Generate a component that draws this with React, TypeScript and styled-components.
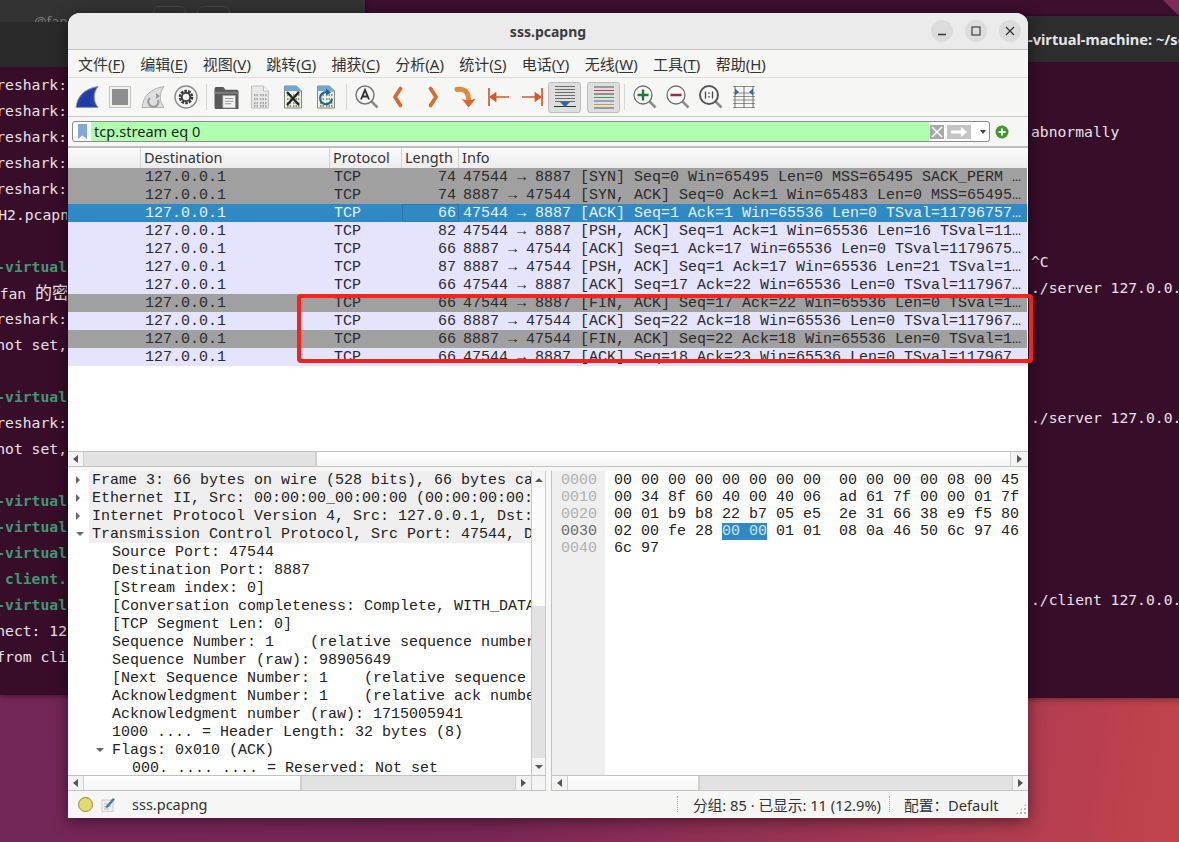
import React from "react";
import styled, { createGlobalStyle } from "styled-components";

const UI_FONT = `"Noto Sans", "Noto Sans CJK SC", sans-serif`;
const MONO_FONT = `"Liberation Mono", monospace`;
const TERM_FONT = `"DejaVu Sans Mono", "Noto Sans CJK SC", monospace`;

const GlobalStyle = createGlobalStyle`
  html, body {
    margin: 0;
    padding: 0;
    overflow: hidden;
  }
  #root {
    width: 1179px;
    height: 842px;
  }
`;

/* ---------- desktop and the terminals behind ---------- */

const Desktop = styled.div`
  position: relative;
  width: 1179px;
  height: 842px;
  overflow: hidden;
  background:
    linear-gradient(180deg, #3d0e2e 0, #3d0e2e 60px, rgba(61, 14, 46, 0) 60px),
    linear-gradient(100deg, #73265a 0%, #7a2656 48%, #a93a52 82%, #c2444a 100%);
`;

const Corner = styled.div`
  position: absolute;
  top: 0;
  right: 0;
  width: 16px;
  height: 16px;
  background: #7d2a5c;
  clip-path: polygon(0 0, 100% 0, 100% 100%);
`;

const Terminal = styled.div<{ $left: number; $top: number; $width: number; $height: number }>`
  position: absolute;
  left: ${(p) => p.$left}px;
  top: ${(p) => p.$top}px;
  width: ${(p) => p.$width}px;
  height: ${(p) => p.$height}px;
  background: #380d2a;
  display: flex;
  flex-direction: column;
  box-shadow: 0 1px 6px rgba(0, 0, 0, 0.45);
`;

const TermBar = styled.div`
  height: 46px;
  flex: none;
  background: #2d2d2d;
  color: #e6e6e6;
  font: bold 14.6px ${UI_FONT};
  display: flex;
  align-items: center;
  padding-left: 28px;
  white-space: nowrap;
  overflow: hidden;
`;

const LeftBarTop = styled.div`
  height: 22px;
  flex: none;
  background: #333333;
  box-sizing: border-box;
  padding: 6px 0 0 153px;
  display: flex;
  gap: 11px;
  position: relative;
  overflow: hidden;
`;

const LeftBarTitle = styled.div`
  position: absolute;
  left: 34px;
  top: 12px;
  font: 14px ${UI_FONT};
  color: #77777a;
  filter: blur(0.6px);
`;

const LeftBarBottom = styled.div`
  height: 45px;
  flex: none;
  background: #2a2a2a;
`;

const TermTab = styled.div`
  width: 33px;
  height: 22px;
  box-sizing: border-box;
  border: 1px solid #454545;
  border-radius: 6px;
`;

const TermBody = styled.div<{ $top: number }>`
  padding-top: ${(p) => p.$top}px;
  font: 14.7px/26px ${TERM_FONT};
  color: #e9e3e7;
  white-space: pre;
`;

const LeftLine = styled.div<{ $green?: boolean }>`
  width: 67px;
  height: 26px;
  display: flex;
  justify-content: flex-end;
  overflow: hidden;
  color: ${(p) => (p.$green ? "#3f9a72" : "#e9e3e7")};
  font-weight: ${(p) => (p.$green ? "bold" : "normal")};
`;

const LeftText = styled.span<{ $over?: number }>`
  flex: none;
  margin-right: ${(p) => -(p.$over ?? 0)}px;
`;

const LeftCjk = styled.span`
  font-size: 17px;
`;

const RightLine = styled.div`
  height: 26px;
  padding-left: 31px;
`;

/* ---------- the Wireshark window ---------- */

const Window = styled.div`
  position: absolute;
  left: 68px;
  top: 13px;
  width: 960px;
  height: 805px;
  border-radius: 12px 12px 0 0;
  background: #f6f6f5;
  box-shadow: 0 3px 16px rgba(0, 0, 0, 0.5);
  display: flex;
  flex-direction: column;
  overflow: hidden;
  font: 14.5px ${UI_FONT};
  color: #2e2e2e;
`;

const TitleBar = styled.div`
  height: 36px;
  flex: none;
  background: #ebebeb;
  border-bottom: 1px solid #c4c4c4;
  display: flex;
  align-items: center;
  justify-content: flex-end;
  gap: 12px;
  padding-right: 7px;
  position: relative;
`;

const TitleText = styled.div`
  position: absolute;
  left: 0;
  right: 0;
  text-align: center;
  font: bold 14px ${UI_FONT};
  color: #3c3c3c;
`;

const WinButton = styled.div`
  width: 22px;
  height: 22px;
  border-radius: 50%;
  background: #dcdcdc;
  display: flex;
  align-items: center;
  justify-content: center;
  margin-top: -1px;
  z-index: 1;
`;

const MenuBar = styled.div`
  height: 27px;
  flex: none;
  border-bottom: 1px solid #dcdcdc;
  display: flex;
  align-items: center;
  gap: 15.3px;
  padding-left: 10px;
  font-size: 15px;
  color: #333;
`;

const MenuItem = styled.div`
  white-space: nowrap;
  u {
    text-underline-offset: 2px;
  }
`;

const ToolBar = styled.div`
  height: 38px;
  flex: none;
  border-bottom: 1px solid #c8c8c8;
  display: flex;
  align-items: center;
  padding-left: 2px;
`;

const ToolButton = styled.div<{ $pressed?: boolean; $gap?: number }>`
  width: 33px;
  height: 31px;
  flex: none;
  box-sizing: border-box;
  margin-left: ${(p) => p.$gap ?? 0}px;
  display: flex;
  align-items: center;
  justify-content: center;
  border-radius: 3px;
  background: ${(p) => (p.$pressed ? "#dedede" : "transparent")};
  border: 1px solid ${(p) => (p.$pressed ? "#bcbcbc" : "transparent")};
`;

const ToolSep = styled.div`
  width: 1px;
  height: 26px;
  flex: none;
  margin: 0 3.5px;
  background: #d8d8d8;
`;

const FilterRow = styled.div`
  height: 29px;
  flex: none;
  display: flex;
  align-items: center;
  padding-left: 4px;
  gap: 5px;
`;

const FilterBox = styled.div`
  width: 918px;
  height: 21px;
  box-sizing: border-box;
  border: 1px solid #8c8c8c;
  border-radius: 3px;
  display: flex;
  align-items: stretch;
  background: #fff;
  overflow: hidden;
`;

const BookmarkSlot = styled.div`
  width: 18px;
  flex: none;
  display: flex;
  align-items: center;
  justify-content: center;
`;

const FilterInput = styled.div`
  width: 838px;
  flex: none;
  padding-left: 3px;
  box-sizing: border-box;
  background: #afffaf;
  color: #1f1f1f;
  font-size: 14.6px;
  line-height: 19px;
`;

const FilterTools = styled.div`
  display: flex;
  align-items: center;
  padding-left: 1px;
  gap: 3px;
`;

const ClearBox = styled.div`
  width: 14px;
  height: 14px;
  background: #a8a8a8;
  display: flex;
  align-items: center;
  justify-content: center;
`;

const ApplyBox = styled.div`
  width: 24px;
  height: 14px;
  background: #c4c4c4;
  display: flex;
  align-items: center;
  justify-content: center;
`;

const Caret = styled.div`
  width: 0;
  height: 0;
  margin-left: 6px;
  border-left: 3.5px solid transparent;
  border-right: 3.5px solid transparent;
  border-top: 4px solid #444;
`;

const PaneGap = styled.div`
  height: 2px;
  flex: none;
  background: #bdbdbd;
`;

const columns = "73px 189px 72px 57px 1fr";

const HeaderRow = styled.div`
  height: 20px;
  flex: none;
  display: grid;
  grid-template-columns: ${columns};
  background: linear-gradient(180deg, #fbfbfb, #ececec);
`;

const HeaderCell = styled.div`
  padding-left: 3px;
  font-size: 14.5px;
  line-height: 19px;
  color: #333;
  border-right: 1px solid #d2d2d2;
  &:last-child {
    border-right: none;
  }
`;

const PacketList = styled.div`
  height: 283px;
  flex: none;
  background: #fff;
`;

const rowColors = {
  fin: { bg: "#a0a0a0", fg: "#2b2b2b" },
  plain: { bg: "#e4e4ff", fg: "#2a2a2e" },
  selected: { bg: "#2e89c4", fg: "#e6f3fc" },
};

type RowKind = keyof typeof rowColors;

const PacketRow = styled.div<{ $kind: RowKind }>`
  height: 18px;
  display: grid;
  grid-template-columns: ${columns};
  margin-right: 1px;
  background: ${(p) => rowColors[p.$kind].bg};
  color: ${(p) => rowColors[p.$kind].fg};
  font: 15px/20px ${MONO_FONT};
  white-space: pre;
  overflow: hidden;
`;

const Cell = styled.div<{ $pad?: number }>`
  padding-left: ${(p) => p.$pad ?? 4}px;
  overflow: hidden;
`;

const LengthCell = styled.div<{ $focus?: boolean }>`
  height: 18px;
  text-align: right;
  padding-right: 2px;
  box-sizing: border-box;
  border: 1px solid ${(p) => (p.$focus ? "#2a79ad" : "transparent")};
  line-height: 18px;
`;

const HScroll = styled.div`
  height: 14px;
  flex: none;
  display: flex;
  background: #fff;
  border-top: 1px solid #c2c2c2;
  border-bottom: 1px solid #c2c2c2;
`;

const ScrollArrow = styled.div<{ $size?: number }>`
  width: ${(p) => p.$size ?? 15}px;
  flex: none;
  display: flex;
  align-items: center;
  justify-content: center;
  background: #f3f3f3;
`;

const ArrowLeft = styled.div`
  border-top: 4px solid transparent;
  border-bottom: 4px solid transparent;
  border-right: 5px solid #555;
`;

const ArrowRight = styled.div`
  border-top: 4px solid transparent;
  border-bottom: 4px solid transparent;
  border-left: 5px solid #555;
`;

const ScrollPart = styled.div<{ $width?: number; $trough?: boolean }>`
  flex: ${(p) => (p.$width ? `0 0 ${p.$width}px` : "1")};
  box-sizing: border-box;
  background: ${(p) => (p.$trough ? "#e2e2e2" : "linear-gradient(180deg, #ffffff, #f4f4f4)")};
  border-left: 1px solid #cfcfcf;
  border-right: 1px solid #cfcfcf;
`;

const Splitter = styled.div`
  height: 4px;
  flex: none;
  background: #f6f6f5;
`;

const Panes = styled.div`
  height: 320px;
  flex: none;
  display: flex;
`;

const DetailCol = styled.div`
  width: 478px;
  flex: none;
  display: flex;
  flex-direction: column;
  background: #fff;
`;

const HexCol = styled.div`
  width: 477px;
  flex: none;
  margin-left: 5px;
  display: flex;
  flex-direction: column;
  box-sizing: border-box;
  border-left: 1px solid #c2c2c2;
  background: #fff;
`;

const DetailMain = styled.div`
  flex: 1;
  min-height: 0;
  display: flex;
`;

const DetailTree = styled.div`
  width: 463px;
  flex: none;
  overflow: hidden;
  font: 15px/20px ${MONO_FONT};
  color: #222;
  white-space: pre;
`;

const TreeRow = styled.div<{ $depth: number; $top?: boolean }>`
  position: relative;
  height: 18px;
  padding-left: ${(p) => 3 + p.$depth * 20}px;
  margin-left: 21px;
  background: ${(p) => (p.$top ? "#efefef" : "transparent")};
`;

const Twisty = styled.span<{ $open?: boolean; $depth: number }>`
  position: absolute;
  left: ${(p) => -13 + p.$depth * 20}px;
  top: ${(p) => (p.$open ? 7 : 5)}px;
  width: 0;
  height: 0;
  ${(p) =>
    p.$open
      ? `border-left: 4px solid transparent; border-right: 4px solid transparent; border-top: 4px solid #666;`
      : `border-top: 4px solid transparent; border-bottom: 4px solid transparent; border-left: 4px solid #666;`}
`;

const VScroll = styled.div`
  width: 15px;
  flex: none;
  box-sizing: border-box;
  border-left: 1px solid #c8c8c8;
  border-right: 1px solid #c8c8c8;
  display: flex;
  flex-direction: column;
`;

const VArrow = styled.div`
  height: 17px;
  flex: none;
  display: flex;
  align-items: center;
  justify-content: center;
  background: #f5f5f5;
`;

const ArrowUp = styled.div`
  border-left: 4px solid transparent;
  border-right: 4px solid transparent;
  border-bottom: 4px solid #555;
`;

const ArrowDown = styled.div`
  border-left: 4px solid transparent;
  border-right: 4px solid transparent;
  border-top: 4px solid #555;
`;

const VPart = styled.div<{ $height?: number; $trough?: boolean }>`
  flex: ${(p) => (p.$height ? `0 0 ${p.$height}px` : "1")};
  background: ${(p) => (p.$trough ? "#e2e2e2" : "#fbfbfb")};
`;

const ScrollFoot = styled.div`
  width: 15px;
  flex: none;
  background: #f3f3f3;
  border-left: 1px solid #c8c8c8;
  border-right: 1px solid #c8c8c8;
  box-sizing: border-box;
`;

const HexMain = styled.div`
  flex: 1;
  min-height: 0;
  display: flex;
  font: 15px/17px ${MONO_FONT};
  white-space: pre;
`;

const Gutter = styled.div`
  width: 53px;
  flex: none;
  box-sizing: border-box;
  padding: 1px 0 0 9px;
  background: #efefef;
`;

const OffsetLine = styled.div<{ $active?: boolean }>`
  color: ${(p) => (p.$active ? "#6a6a6a" : "#b0b0b0")};
`;

const HexBytes = styled.div`
  padding: 1px 0 0 9px;
  color: #222;
`;

const HexMark = styled.span`
  background: #2e89c4;
  color: #cfe6f6;
`;

const StatusBar = styled.div`
  height: 28px;
  flex: none;
  box-sizing: border-box;
  padding: 0 0 2px 10px;
  display: flex;
  align-items: center;
  font-size: 14.7px;
  color: #333;
`;

const Led = styled.div`
  width: 13px;
  height: 13px;
  border-radius: 50%;
  background: #e0dc6e;
  border: 1px solid #8b8a44;
`;

const EditSlot = styled.div`
  margin-left: 8px;
  display: flex;
`;

const StatusName = styled.div`
  margin-left: 16px;
  font-size: 14.5px;
`;

const StatusSep = styled.div`
  width: 0;
  height: 16px;
  border-left: 1px dotted #aaa;
`;

const StatusGroup = styled.div`
  margin-left: auto;
  display: flex;
  align-items: center;
`;

const StatusCount = styled.div`
  margin: 0 8px 0 15px;
`;

const StatusProfile = styled.div`
  width: 97px;
  margin-left: 14px;
  white-space: pre;
`;

const Grip = styled.div`
  width: 12px;
  height: 12px;
  margin: 10px 1px 0 14px;
  background-image: radial-gradient(#b8b8b8 1px, transparent 1px);
  background-size: 4px 4px;
  clip-path: polygon(100% 0, 100% 100%, 0 100%);
`;

const RedBox = styled.div`
  position: absolute;
  left: 297px;
  top: 294px;
  width: 736px;
  height: 69px;
  box-sizing: border-box;
  border: 4px solid #f4241c;
  border-radius: 4px;
`;

/* ---------- toolbar drawings ---------- */

const Icon = ({ children, size = 24, view = 24 }: { children: React.ReactNode; size?: number; view?: number }) => (
  <svg width={size} height={size} viewBox={`0 0 ${view} ${view}`} fill="none">
    {children}
  </svg>
);

const FinIcon = () => (
  <Icon>
    <path d="M1 22.5C2 12 9 3.5 23 1.5C18 8 18 16 23 22.5Z" fill="#2740b0" stroke="#8d97a8" strokeWidth="1" />
    <path d="M5 21C7 13 12 7 19 4C14 9 14 16 17 21Z" fill="#1c3aa8" />
  </Icon>
);

const StopIcon = () => (
  <Icon>
    <rect x="1.5" y="1.5" width="21" height="21" fill="#efefef" stroke="#c4c4c4" />
    <rect x="4" y="4" width="16" height="16" fill="#8e8e8e" />
  </Icon>
);

const RestartIcon = () => (
  <Icon>
    <path d="M1 22.5C2 12 9 3.5 23 1.5C18 8 18 16 23 22.5Z" fill="#dedede" stroke="#b0b0b0" />
    <path d="M9 13a5 5 0 1 0 8 2" stroke="#9a9a9a" strokeWidth="2.2" />
    <path d="M15 8v6l4-3z" fill="#9a9a9a" />
  </Icon>
);

const GearIcon = () => (
  <Icon>
    <circle cx="12" cy="12" r="11" fill="#f4f4f4" stroke="#8a8a8a" strokeWidth="1.4" />
    <circle cx="12" cy="12" r="6" stroke="#3a3a3a" strokeWidth="2.6" strokeDasharray="2.6 1.1" />
    <circle cx="12" cy="12" r="4.2" stroke="#3a3a3a" strokeWidth="1.8" />
  </Icon>
);

const FolderIcon = () => (
  <Icon size={25}>
    <path d="M0.5 3.5A1.5 1.5 0 0 1 2 2h7l2 2.5h11A1.5 1.5 0 0 1 23.5 6v17H2A1.5 1.5 0 0 1 0.5 21.5Z" fill="#5a5a5a" />
    <rect x="0.5" y="6.5" width="23" height="2" fill="#7c7c7c" />
    <rect x="8.5" y="10" width="12" height="12" fill="#f1f1f1" stroke="#9a9a9a" strokeWidth=".6" />
    <path d="M10.5 13h8M10.5 15.5h8M10.5 18h6" stroke="#9a9a9a" />
  </Icon>
);

const FileShape = ({ fill = "#e8e8e8", stroke = "#c0c0c0" }: { fill?: string; stroke?: string }) => (
  <>
    <path d="M3.5 1h12l5 5v17h-17z" fill={fill} stroke={stroke} />
    <path d="M15.5 1v5h5" fill="#f8f8f8" stroke={stroke} />
  </>
);

const BinaryRows = ({ color }: { color: string }) => (
  <g fill={color}>
    {[9, 13, 17, 20].map((y) =>
      [6, 8.5, 12, 14.5, 17].map((x) => <rect key={`${x}-${y}`} x={x} y={y} width="1.5" height="2.2" />)
    )}
  </g>
);

const BinFileIcon = () => (
  <Icon>
    <FileShape />
    <BinaryRows color="#a8a8a8" />
  </Icon>
);

const CloseFileIcon = () => (
  <Icon>
    <FileShape fill="#eef2e4" stroke="#7f8a78" />
    <path d="M3.5 1h12l5 5h-17z" fill="#6fa8d8" />
    <BinaryRows color="#8f9a7c" />
    <path d="M6 7l12 13M18 7L6 20" stroke="#222" strokeWidth="2.2" />
  </Icon>
);

const ReloadFileIcon = () => (
  <Icon>
    <FileShape fill="#eef2e4" stroke="#7f8a78" />
    <path d="M3.5 1h12l5 5h-17z" fill="#6fa8d8" />
    <BinaryRows color="#8f9a7c" />
    <path d="M15 8a6 6 0 1 0 3 6" stroke="#24609f" strokeWidth="2.2" />
    <path d="M12 3.5v7l5-3z" fill="#24609f" />
  </Icon>
);

const FindIcon = () => (
  <Icon>
    <path d="M16 16l6.5 6.5" stroke="#8d8d8d" strokeWidth="2.6" />
    <circle cx="10" cy="10" r="9" fill="#f6f6f6" stroke="#777" strokeWidth="1.5" />
    <path d="M6 14.5L10 5l4 9.5M7.5 11.5h5" stroke="#333" strokeWidth="1.9" />
  </Icon>
);

const ChevronIcon = ({ flip }: { flip?: boolean }) => (
  <Icon>
    <path
      d={flip ? "M9.5 3.5l5.5 8.5-5.500 8.500" : "M12.5 3.5L7 12l5.500 8.500"}
      stroke="#dc6a2c"
      strokeWidth="3.8"
      strokeLinecap="round"
      strokeLinejoin="round"
    />
  </Icon>
);

const JumpIcon = () => (
  <Icon>
    <path d="M3 4.5c6 -1 11 1 11.500 9" stroke="#e08a3c" strokeWidth="5" strokeLinecap="round" />
    <path d="M7.5 13.5l7 9 7.500-9c-2.500 1-5 1.500-7.500 1.500s-5-.5-7.500-1.500z" fill="#d9662a" />
  </Icon>
);

const EdgeIcon = ({ flip }: { flip?: boolean }) => (
  <Icon>
    <g transform={flip ? "matrix(-1 0 0 1 24 0)" : undefined} stroke="#d9562a" strokeWidth="1.7">
      <path d="M2 3v18" />
      <path d="M7 12h15" />
      <path d="M3.5 12l5-3.5v7z" fill="#d9562a" />
    </g>
  </Icon>
);

const AutoScrollIcon = () => (
  <Icon size={26} view={26}>
    <path d="M3 2.5h20M3 5.5h20M3 8.5h20M3 11.5h20M3 14.5h20M3 17.5h20" stroke="#6c6c6c" />
    <path d="M2 22.5h22" stroke="#333" />
    <path d="M8 18h10l-5 5z" fill="#2c62a8" />
  </Icon>
);

const ColorizeIcon = () => (
  <Icon size={26} view={26}>
    <path d="M3 3h20" stroke="#555" />
    <path d="M3 6.5h20" stroke="#c8404a" />
    <path d="M3 10h20" stroke="#444" />
    <path d="M3 13.5h20" stroke="#4a9a4a" />
    <path d="M3 17h20" stroke="#4a6ab0" />
    <path d="M3 20.5h20" stroke="#c8a030" />
    <path d="M3 24h20" stroke="#555" />
  </Icon>
);

const ZoomIcon = ({ mark }: { mark: "in" | "out" | "fit" }) => (
  <Icon>
    <path d="M16 16l6.5 6.5" stroke="#8d8d8d" strokeWidth="2.6" />
    <circle cx="10" cy="10" r="9" fill="#f8f8f8" stroke={mark === "fit" ? "#555" : "#6e6e6e"} strokeWidth={mark === "fit" ? 2 : 1.3} />
    {mark === "in" && <path d="M4.5 10h11M10 4.5v11" stroke="#1f7a2e" strokeWidth="2.4" />}
    {mark === "out" && <path d="M4.5 10h11" stroke="#9c2a4a" strokeWidth="2.4" />}
    {mark === "fit" && <path d="M6.5 6.5v7M13.5 6.5v7M10 7.5V9M10 11v1.5" stroke="#444" strokeWidth="1.3" />}
  </Icon>
);

const ResizeColsIcon = () => (
  <Icon>
    <path d="M1 1.5h22M1 8h22M1 11.5h22M1 15h22M1 18.5h22M1 22.5h22" stroke="#777" strokeWidth=".8" />
    <path d="M3 1v22M12 1v22M21 1v22" stroke="#555" strokeWidth=".8" />
    <path d="M3 3.5l4 3.5-4 3.500zM21 3.5l-4 3.5 4 3.500z" fill="#3268a8" />
  </Icon>
);

const BookmarkIcon = () => (
  <svg width="9" height="15" viewBox="0 0 9 15">
    <path d="M0 0h9v15L4.5 11.5 0 15z" fill="#7fa8d8" />
  </svg>
);

const AddFilterIcon = () => (
  <svg width="14" height="14" viewBox="0 0 14 14">
    <circle cx="7" cy="7" r="6.5" fill="#3f9a26" />
    <path d="M3.5 7h7M7 3.5v7" stroke="#fff" strokeWidth="2" />
  </svg>
);

const EditIcon = () => (
  <svg width="15" height="15" viewBox="0 0 15 15">
    <rect x="1" y="3" width="11" height="11.5" fill="#f2f2ea" stroke="#bbb" strokeWidth=".7" />
    <path d="M3 7h7M3 9.5h7M3 12h5" stroke="#aaa" strokeWidth=".8" />
    <path d="M5 9l7-8 2 1.5-7 8-2.5.5z" fill="#3f7fb8" />
  </svg>
);

/* ---------- content ---------- */

const menus: [string, string][] = [
  ["文件", "F"],
  ["编辑", "E"],
  ["视图", "V"],
  ["跳转", "G"],
  ["捕获", "C"],
  ["分析", "A"],
  ["统计", "S"],
  ["电话", "Y"],
  ["无线", "W"],
  ["工具", "T"],
  ["帮助", "H"],
];

const packets: { kind: RowKind; length: number; info: string }[] = [
  { kind: "fin", length: 74, info: "47544 → 8887 [SYN] Seq=0 Win=65495 Len=0 MSS=65495 SACK_PERM …" },
  { kind: "fin", length: 74, info: "8887 → 47544 [SYN, ACK] Seq=0 Ack=1 Win=65483 Len=0 MSS=65495…" },
  { kind: "selected", length: 66, info: "47544 → 8887 [ACK] Seq=1 Ack=1 Win=65536 Len=0 TSval=11796757…" },
  { kind: "plain", length: 82, info: "47544 → 8887 [PSH, ACK] Seq=1 Ack=1 Win=65536 Len=16 TSval=11…" },
  { kind: "plain", length: 66, info: "8887 → 47544 [ACK] Seq=1 Ack=17 Win=65536 Len=0 TSval=1179675…" },
  { kind: "plain", length: 87, info: "8887 → 47544 [PSH, ACK] Seq=1 Ack=17 Win=65536 Len=21 TSval=1…" },
  { kind: "plain", length: 66, info: "47544 → 8887 [ACK] Seq=17 Ack=22 Win=65536 Len=0 TSval=117967…" },
  { kind: "fin", length: 66, info: "47544 → 8887 [FIN, ACK] Seq=17 Ack=22 Win=65536 Len=0 TSval=1…" },
  { kind: "plain", length: 66, info: "8887 → 47544 [ACK] Seq=22 Ack=18 Win=65536 Len=0 TSval=117967…" },
  { kind: "fin", length: 66, info: "8887 → 47544 [FIN, ACK] Seq=22 Ack=18 Win=65536 Len=0 TSval=1…" },
  { kind: "plain", length: 66, info: "47544 → 8887 [ACK] Seq=18 Ack=23 Win=65536 Len=0 TSval=117967…" },
];

const tree: { depth: number; text: string; twisty?: "open" | "closed" }[] = [
  { depth: 0, twisty: "closed", text: "Frame 3: 66 bytes on wire (528 bits), 66 bytes ca" },
  { depth: 0, twisty: "closed", text: "Ethernet II, Src: 00:00:00_00:00:00 (00:00:00:00:" },
  { depth: 0, twisty: "closed", text: "Internet Protocol Version 4, Src: 127.0.0.1, Dst:" },
  { depth: 0, twisty: "open", text: "Transmission Control Protocol, Src Port: 47544, D" },
  { depth: 1, text: "Source Port: 47544" },
  { depth: 1, text: "Destination Port: 8887" },
  { depth: 1, text: "[Stream index: 0]" },
  { depth: 1, text: "[Conversation completeness: Complete, WITH_DATA" },
  { depth: 1, text: "[TCP Segment Len: 0]" },
  { depth: 1, text: "Sequence Number: 1    (relative sequence number" },
  { depth: 1, text: "Sequence Number (raw): 98905649" },
  { depth: 1, text: "[Next Sequence Number: 1    (relative sequence" },
  { depth: 1, text: "Acknowledgment Number: 1    (relative ack numbe" },
  { depth: 1, text: "Acknowledgment number (raw): 1715005941" },
  { depth: 1, text: "1000 .... = Header Length: 32 bytes (8)" },
  { depth: 1, twisty: "open", text: "Flags: 0x010 (ACK)" },
  { depth: 2, text: "000. .... .... = Reserved: Not set" },
];

const leftLines: { text: string; cjk?: string; green?: boolean; over?: number }[] = [
  { text: "Wireshark:" },
  { text: "Wireshark:" },
  { text: "Wireshark:" },
  { text: "Wireshark:" },
  { text: "Wireshark:" },
  { text: "TH2.pcapn", over: 2 },
  { text: "" },
  { text: "n-virtual", green: true },
  { text: "fan ", cjk: "的密", over: 2 },
  { text: "Wireshark:" },
  { text: " not set," },
  { text: "" },
  { text: "n-virtual", green: true },
  { text: "Wireshark:" },
  { text: " not set," },
  { text: "" },
  { text: "n-virtual", green: true },
  { text: "n-virtual", green: true },
  { text: "n-virtual", green: true },
  { text: " client.", green: true },
  { text: "n-virtual", green: true },
  { text: "nnect: 12" },
  { text: " from cli" },
];

const rightLines: Record<number, string> = {
  2: "abnormally",
  7: "^C",
  8: "./server 127.0.0.1",
  13: "./server 127.0.0.1",
  20: "./client 127.0.0.1",
};

export default function App() {
  return (
    <Desktop>
      <GlobalStyle />
      <Corner />

      <Terminal $left={0} $top={0} $width={365} $height={695}>
        <LeftBarTop>
          <LeftBarTitle>@fan</LeftBarTitle>
          <TermTab />
          <TermTab />
        </LeftBarTop>
        <LeftBarBottom />
        <TermBody $top={5}>
          {leftLines.map((line, i) => (
            <LeftLine key={i} $green={line.green}>
              <LeftText $over={line.over}>
                {line.text}
                {line.cjk && <LeftCjk>{line.cjk}</LeftCjk>}
              </LeftText>
            </LeftLine>
          ))}
        </TermBody>
      </Terminal>

      <Terminal $left={1000} $top={16} $width={260} $height={682}>
        <TermBar>-virtual-machine: ~/socket</TermBar>
        <TermBody $top={5}>
          {Array.from({ length: 24 }, (_, i) => (
            <RightLine key={i}>{rightLines[i] ?? ""}</RightLine>
          ))}
        </TermBody>
      </Terminal>

      <Window>
        <TitleBar>
          <TitleText>sss.pcapng</TitleText>
          <WinButton>
            <svg width="10" height="10" viewBox="0 0 10 10">
              <path d="M1 8.5h8" stroke="#333" strokeWidth="1.3" />
            </svg>
          </WinButton>
          <WinButton>
            <svg width="10" height="10" viewBox="0 0 10 10">
              <rect x="1" y="1" width="8" height="8" fill="none" stroke="#333" strokeWidth="1.1" />
            </svg>
          </WinButton>
          <WinButton>
            <svg width="10" height="10" viewBox="0 0 10 10">
              <path d="M1 1l8 8M9 1l-8 8" stroke="#333" strokeWidth="1.2" />
            </svg>
          </WinButton>
        </TitleBar>

        <MenuBar>
          {menus.map(([label, key]) => (
            <MenuItem key={key}>
              {label}(<u>{key}</u>)
            </MenuItem>
          ))}
        </MenuBar>

        <ToolBar>
          <ToolButton><FinIcon /></ToolButton>
          <ToolButton><StopIcon /></ToolButton>
          <ToolButton><RestartIcon /></ToolButton>
          <ToolButton><GearIcon /></ToolButton>
          <ToolSep />
          <ToolButton><FolderIcon /></ToolButton>
          <ToolButton><BinFileIcon /></ToolButton>
          <ToolButton><CloseFileIcon /></ToolButton>
          <ToolButton><ReloadFileIcon /></ToolButton>
          <ToolSep />
          <ToolButton><FindIcon /></ToolButton>
          <ToolButton><ChevronIcon /></ToolButton>
          <ToolButton><ChevronIcon flip /></ToolButton>
          <ToolButton><JumpIcon /></ToolButton>
          <ToolButton><EdgeIcon /></ToolButton>
          <ToolButton><EdgeIcon flip /></ToolButton>
          <ToolButton $pressed><AutoScrollIcon /></ToolButton>
          <ToolButton $pressed $gap={6}><ColorizeIcon /></ToolButton>
          <ToolSep />
          <ToolButton><ZoomIcon mark="in" /></ToolButton>
          <ToolButton><ZoomIcon mark="out" /></ToolButton>
          <ToolButton><ZoomIcon mark="fit" /></ToolButton>
          <ToolButton><ResizeColsIcon /></ToolButton>
        </ToolBar>

        <FilterRow>
          <FilterBox>
            <BookmarkSlot><BookmarkIcon /></BookmarkSlot>
            <FilterInput>tcp.stream eq 0</FilterInput>
            <FilterTools>
              <ClearBox>
                <svg width="12" height="12" viewBox="0 0 12 12">
                  <path d="M1 1l10 10M11 1L1 11" stroke="#fff" strokeWidth="1.5" />
                </svg>
              </ClearBox>
              <ApplyBox>
                <svg width="18" height="10" viewBox="0 0 18 10">
                  <path d="M1 3.5h10V0l6 5-6 5V6.5H1z" fill="#fff" />
                </svg>
              </ApplyBox>
              <Caret />
            </FilterTools>
          </FilterBox>
          <AddFilterIcon />
        </FilterRow>
        <PaneGap />

        <HeaderRow>
          <HeaderCell />
          <HeaderCell>Destination</HeaderCell>
          <HeaderCell>Protocol</HeaderCell>
          <HeaderCell>Length</HeaderCell>
          <HeaderCell>Info</HeaderCell>
        </HeaderRow>
        <PacketList>
          {packets.map((p, i) => (
            <PacketRow key={i} $kind={p.kind}>
              <Cell />
              <Cell>127.0.0.1</Cell>
              <Cell>TCP</Cell>
              <LengthCell $focus={p.kind === "selected"}>{p.length}</LengthCell>
              <Cell>{p.info}</Cell>
            </PacketRow>
          ))}
        </PacketList>
        <HScroll>
          <ScrollArrow><ArrowLeft /></ScrollArrow>
          <ScrollPart $width={233} $trough />
          <ScrollPart />
          <ScrollArrow $size={17}><ArrowRight /></ScrollArrow>
        </HScroll>
        <Splitter />

        <Panes>
          <DetailCol>
            <DetailMain>
              <DetailTree>
                {tree.map((row, i) => (
                  <TreeRow key={i} $depth={row.depth} $top={row.depth === 0}>
                    {row.twisty && <Twisty $depth={row.depth} $open={row.twisty === "open"} />}
                    {row.text}
                  </TreeRow>
                ))}
              </DetailTree>
              <VScroll>
                <VArrow><ArrowUp /></VArrow>
                <VPart $height={118} />
                <VPart $trough />
                <VArrow><ArrowDown /></VArrow>
              </VScroll>
            </DetailMain>
            <HScroll>
              <ScrollArrow><ArrowLeft /></ScrollArrow>
              <ScrollPart $width={218} />
              <ScrollPart $trough />
              <ScrollArrow><ArrowRight /></ScrollArrow>
              <ScrollFoot />
            </HScroll>
          </DetailCol>

          <HexCol>
            <HexMain>
              <Gutter>
                <OffsetLine>0000</OffsetLine>
                <OffsetLine>0010</OffsetLine>
                <OffsetLine>0020</OffsetLine>
                <OffsetLine $active>0030</OffsetLine>
                <OffsetLine>0040</OffsetLine>
              </Gutter>
              <HexBytes>
                <div>00 00 00 00 00 00 00 00  00 00 00 00 08 00 45</div>
                <div>00 34 8f 60 40 00 40 06  ad 61 7f 00 00 01 7f</div>
                <div>00 01 b9 b8 22 b7 05 e5  2e 31 66 38 e9 f5 80</div>
                <div>
                  02 00 fe 28 <HexMark>00 00</HexMark> 01 01  08 0a 46 50 6c 97 46
                </div>
                <div>6c 97</div>
              </HexBytes>
            </HexMain>
            <HScroll>
              <ScrollArrow><ArrowLeft /></ScrollArrow>
              <ScrollPart $width={132} />
              <ScrollPart $trough />
              <ScrollArrow><ArrowRight /></ScrollArrow>
            </HScroll>
          </HexCol>
        </Panes>

        <StatusBar>
          <Led />
          <EditSlot><EditIcon /></EditSlot>
          <StatusName>sss.pcapng</StatusName>
          <StatusGroup>
            <StatusSep />
            <StatusCount>分组: 85 · 已显示: 11 (12.9%)</StatusCount>
            <StatusSep />
            <StatusProfile>配置：Default</StatusProfile>
          </StatusGroup>
          <Grip />
        </StatusBar>
      </Window>

      <RedBox />
    </Desktop>
  );
}
